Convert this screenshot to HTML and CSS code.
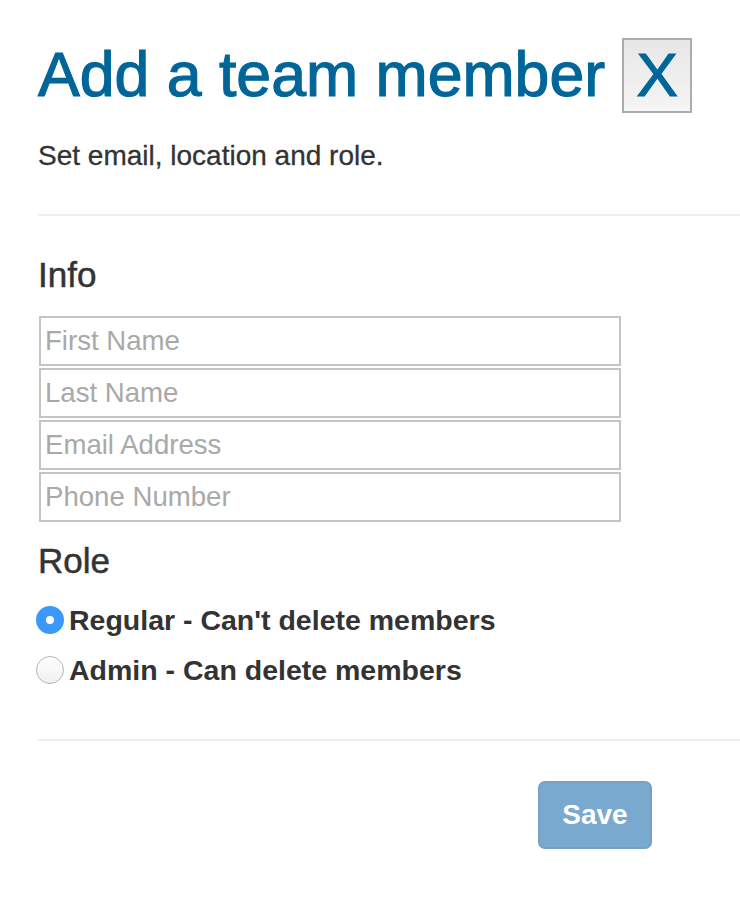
FILE: index.html
```html
<!DOCTYPE html>
<html lang="en">
<head>
<meta charset="utf-8">
<title>Add a team member</title>
<link rel="stylesheet" href="styles.css">
</head>
<body>
<div class="modal">
  <h1 class="title">Add a team member <button class="close" type="button">X</button></h1>
  <p class="subtitle">Set email, location and role.</p>
  <hr class="divider">
  <h4 class="section-title section-info">Info</h4>
  <div class="fields">
    <input class="field" type="text" placeholder="First Name">
    <input class="field" type="text" placeholder="Last Name">
    <input class="field" type="email" placeholder="Email Address">
    <input class="field" type="tel" placeholder="Phone Number">
  </div>
  <h4 class="section-title section-role">Role</h4>
  <div class="roles">
    <label class="role"><input class="radio" type="radio" name="role" checked><span>Regular - Can't delete members</span></label>
    <label class="role"><input class="radio" type="radio" name="role"><span>Admin - Can delete members</span></label>
  </div>
  <hr class="divider divider-bottom">
  <div class="footer">
    <button class="save" type="button" disabled>Save</button>
  </div>
</div>
</body>
</html>
```
FILE: styles.css
```css
html, body {
  margin: 0;
  padding: 0;
  background: #fff;
}

body {
  font-family: "Liberation Sans", Arial, Helvetica, sans-serif;
  color: #333;
}

.modal {
  padding-left: 38px;
}

.title {
  margin: 38px 0 0;
  font-size: 62.6px;
  font-weight: normal;
  line-height: 1.1;
  color: #006699;
  -webkit-text-stroke: 1.2px #006699;
}

.close {
  font-family: "Liberation Sans", Arial, Helvetica, sans-serif;
  font-size: 62px;
  line-height: 62px;
  color: #006699;
  -webkit-text-stroke: 1.2px #006699;
  padding: 4px 12px 5px;
  margin: 0;
  border: 2px solid #acacac;
  background: linear-gradient(#e7e7e7, #f5f5f5);
  border-radius: 0;
  vertical-align: baseline;
}

.subtitle {
  margin: 23px 0 0;
  font-size: 28px;
  line-height: 40px;
  color: #333;
  -webkit-text-stroke: 0.3px #333;
}

.divider {
  margin: 38px 0 0;
  border: 0;
  border-top: 2px solid #eee;
  height: 0;
}

.section-title {
  margin: 0;
  font-size: 35px;
  font-weight: normal;
  line-height: 1.1;
  color: #333;
  -webkit-text-stroke: 0.5px #333;
}

.section-info {
  margin-top: 40px;
}

.fields {
  margin-top: 21px;
  display: flex;
  flex-direction: column;
  gap: 2px;
  width: 582px;
  margin-left: 1px;
}

.field {
  box-sizing: border-box;
  height: 50px;
  width: 582px;
  margin: 0;
  padding: 0 4px;
  border: 2px solid #c4c4c4;
  border-radius: 0;
  font-family: "Liberation Sans", Arial, Helvetica, sans-serif;
  font-size: 27.6px;
  color: #555;
  background: #fff;
  outline: none;
}

.field::placeholder {
  color: #a9a9a9;
  opacity: 1;
}

.section-role {
  margin-top: 20px;
}

.roles {
  margin-top: 15px;
  display: flex;
  flex-direction: column;
}

.role {
  display: flex;
  align-items: center;
  gap: 5px;
  height: 50px;
  font-size: 28.5px;
  font-weight: bold;
  color: #333;
  margin-left: -2px;
}

.radio {
  appearance: none;
  -webkit-appearance: none;
  box-sizing: border-box;
  width: 28px;
  height: 28px;
  margin: 0;
  border-radius: 50%;
  border: 1px solid #b5b5b5;
  background: linear-gradient(#fff, #f0f0f0);
  flex: none;
}

.radio:checked {
  border: 10px solid #3b99fc;
  background: #fff;
}

.divider-bottom {
  margin-top: 44px;
}

.footer {
  display: flex;
  justify-content: flex-end;
  padding-right: 88px;
  margin-top: 40px;
}

.save {
  box-sizing: border-box;
  width: 114px;
  height: 68px;
  margin: 0;
  padding: 0;
  border: 2px solid #77a0c4;
  border-radius: 7px;
  background: #7aa9d0;
  color: #fff;
  font-family: "Liberation Sans", Arial, Helvetica, sans-serif;
  font-size: 28px;
  font-weight: bold;
}
```
